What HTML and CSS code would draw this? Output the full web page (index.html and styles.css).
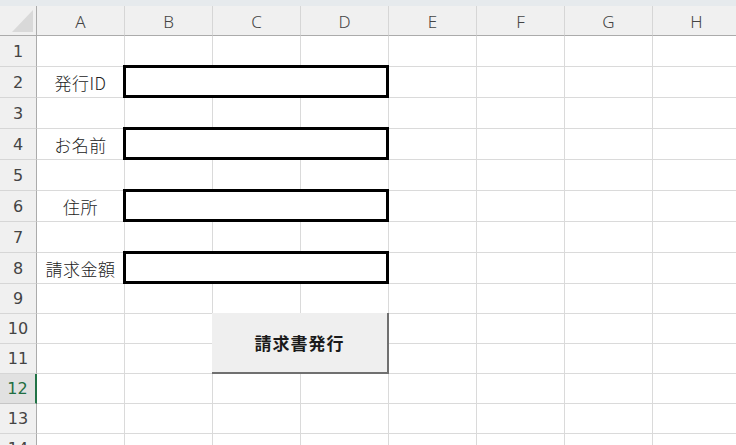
FILE: index.html
```html
<!DOCTYPE html>
<html lang="ja">
<head>
<meta charset="utf-8">
<title>請求書発行</title>
<link rel="stylesheet" href="styles.css">
</head>
<body>
<div class="app">
  <div class="topband"></div>
  <div class="sheet">
    <div class="corner"><svg class="corner-tri" width="37" height="29" viewBox="0 0 37 29"><polygon points="12,26 33,26 33,4" fill="#d9d9d9"/></svg></div>
    <div class="colhead">A</div>
    <div class="colhead">B</div>
    <div class="colhead">C</div>
    <div class="colhead">D</div>
    <div class="colhead">E</div>
    <div class="colhead">F</div>
    <div class="colhead">G</div>
    <div class="colhead">H</div>

    <div class="rowhead">1</div><div class="cell"></div><div class="cell"></div><div class="cell"></div><div class="cell"></div><div class="cell"></div><div class="cell"></div><div class="cell"></div><div class="cell"></div>
    <div class="rowhead">2</div><div class="cell label">発行ID</div><div class="cell"></div><div class="cell"></div><div class="cell"></div><div class="cell"></div><div class="cell"></div><div class="cell"></div><div class="cell"></div>
    <div class="rowhead">3</div><div class="cell"></div><div class="cell"></div><div class="cell"></div><div class="cell"></div><div class="cell"></div><div class="cell"></div><div class="cell"></div><div class="cell"></div>
    <div class="rowhead">4</div><div class="cell label">お名前</div><div class="cell"></div><div class="cell"></div><div class="cell"></div><div class="cell"></div><div class="cell"></div><div class="cell"></div><div class="cell"></div>
    <div class="rowhead">5</div><div class="cell"></div><div class="cell"></div><div class="cell"></div><div class="cell"></div><div class="cell"></div><div class="cell"></div><div class="cell"></div><div class="cell"></div>
    <div class="rowhead">6</div><div class="cell label">住所</div><div class="cell"></div><div class="cell"></div><div class="cell"></div><div class="cell"></div><div class="cell"></div><div class="cell"></div><div class="cell"></div>
    <div class="rowhead">7</div><div class="cell"></div><div class="cell"></div><div class="cell"></div><div class="cell"></div><div class="cell"></div><div class="cell"></div><div class="cell"></div><div class="cell"></div>
    <div class="rowhead">8</div><div class="cell label">請求金額</div><div class="cell"></div><div class="cell"></div><div class="cell"></div><div class="cell"></div><div class="cell"></div><div class="cell"></div><div class="cell"></div>
    <div class="rowhead">9</div><div class="cell"></div><div class="cell"></div><div class="cell"></div><div class="cell"></div><div class="cell"></div><div class="cell"></div><div class="cell"></div><div class="cell"></div>
    <div class="rowhead">10</div><div class="cell"></div><div class="cell"></div><div class="cell"></div><div class="cell"></div><div class="cell"></div><div class="cell"></div><div class="cell"></div><div class="cell"></div>
    <div class="rowhead">11</div><div class="cell"></div><div class="cell"></div><div class="cell"></div><div class="cell"></div><div class="cell"></div><div class="cell"></div><div class="cell"></div><div class="cell"></div>
    <div class="rowhead selected">12</div><div class="cell"></div><div class="cell"></div><div class="cell"></div><div class="cell"></div><div class="cell"></div><div class="cell"></div><div class="cell"></div><div class="cell"></div>
    <div class="rowhead">13</div><div class="cell"></div><div class="cell"></div><div class="cell"></div><div class="cell"></div><div class="cell"></div><div class="cell"></div><div class="cell"></div><div class="cell"></div>
    <div class="rowhead">14</div><div class="cell"></div><div class="cell"></div><div class="cell"></div><div class="cell"></div><div class="cell"></div><div class="cell"></div><div class="cell"></div><div class="cell"></div>

    <div class="inputbox box-id"></div>
    <div class="inputbox box-name"></div>
    <div class="inputbox box-addr"></div>
    <div class="inputbox box-amount"></div>
    <div class="sheet-button">請求書発行</div>
  </div>
</div>
</body>
</html>
```
FILE: styles.css
```css
html, body {
  margin: 0;
  padding: 0;
  background: #ffffff;
}
.app {
  width: 736px;
  height: 445px;
  overflow: hidden;
  font-family: "Noto Sans", "Noto Sans CJK JP", sans-serif;
}
.topband {
  height: 6px;
  background: #e6eaed;
}
.sheet {
  position: relative;
  display: grid;
  grid-template-columns: 37px repeat(8, 88px);
  grid-template-rows: 30px repeat(8, 31px) repeat(6, 30px);
  width: 741px;
}
.sheet > div {
  box-sizing: border-box;
}
.corner {
  background: #f0f0f0;
  border-right: 1px solid #ababab;
  border-bottom: 1px solid #ababab;
}
.corner-tri {
  display: block;
}
.colhead {
  background: #f0f0f0;
  border-right: 1px solid #d6d6d6;
  border-bottom: 1px solid #ababab;
  display: flex;
  align-items: center;
  justify-content: center;
  font-size: 17px;
  font-weight: 300;
  color: #444444;
  padding-top: 1px;
}
.rowhead {
  background: #f0f0f0;
  border-right: 1px solid #ababab;
  border-bottom: 1px solid #d6d6d6;
  display: flex;
  align-items: center;
  justify-content: center;
  font-family: "DejaVu Sans", sans-serif;
  font-size: 16px;
  color: #444444;
}
.rowhead.selected {
  background: #e1e1e1;
  color: #1f6e43;
  border-right: 2px solid #217346;
  border-bottom-color: #c6c6c6;
}
.cell {
  border-right: 1px solid #dadada;
  border-bottom: 1px solid #dadada;
}
.label {
  display: flex;
  align-items: center;
  justify-content: center;
  font-family: "Noto Sans CJK JP", sans-serif;
  font-size: 17px;
  font-weight: 300;
  letter-spacing: 0.5px;
  color: #222222;
}
.inputbox {
  position: absolute;
  left: 123px;
  width: 266px;
  height: 33px;
  border: 3px solid #000000;
  background: #ffffff;
}
.box-id { top: 59px; }
.box-name { top: 121px; }
.box-addr { top: 183px; }
.box-amount { top: 245px; }
.sheet-button {
  position: absolute;
  left: 212px;
  top: 307px;
  width: 177px;
  height: 61px;
  background: #efefef;
  border-right: 2px solid #707070;
  border-bottom: 2px solid #707070;
  display: flex;
  align-items: center;
  justify-content: center;
  font-family: "Noto Sans CJK JP", sans-serif;
  font-weight: bold;
  font-size: 17px;
  letter-spacing: 1px;
  color: #1a1a1a;
}
```
